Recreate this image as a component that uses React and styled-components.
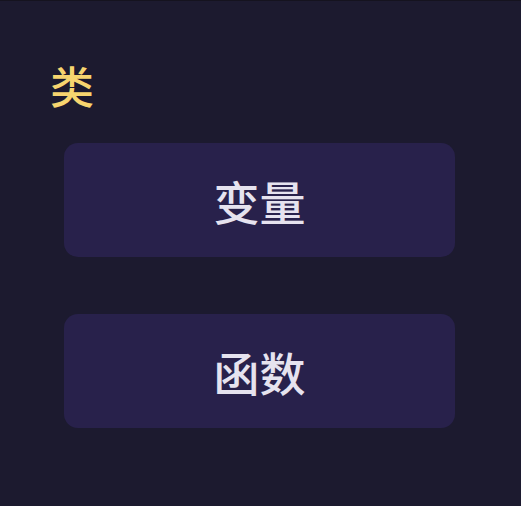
import React from "react";
import styled, { createGlobalStyle } from "styled-components";

const Global = createGlobalStyle`
  html, body { margin: 0; padding: 0; background: #1c1a2f; }
  body { font-family: "Noto Sans CJK SC", "Noto Sans", sans-serif; }
`;

const Page = styled.div`
  min-height: 506px;
  box-sizing: border-box;
  border-top: 1px solid #15131f;
  padding: 50px 66px 0 50px;
  display: flex;
  flex-direction: column;
`;

const Heading = styled.h2`
  margin: 0;
  color: #f7d56f;
  font-size: 44px;
  font-weight: 500;
  line-height: 68px;
`;

const List = styled.div`
  display: flex;
  flex-direction: column;
  gap: 57px;
  margin-top: 24px;
  padding-left: 14px;
`;

const Item = styled.button`
  height: 114px;
  border: none;
  border-radius: 14px;
  background: #28214b;
  color: #e6e3ef;
  font-family: inherit;
  font-size: 46px;
  font-weight: 500;
  cursor: pointer;
  display: flex;
  align-items: center;
  justify-content: center;
  padding: 0;
`;

export default function App() {
  return (
    <>
      <Global />
      <Page>
        <Heading>类</Heading>
        <List>
          <Item>变量</Item>
          <Item>函数</Item>
        </List>
      </Page>
    </>
  );
}
